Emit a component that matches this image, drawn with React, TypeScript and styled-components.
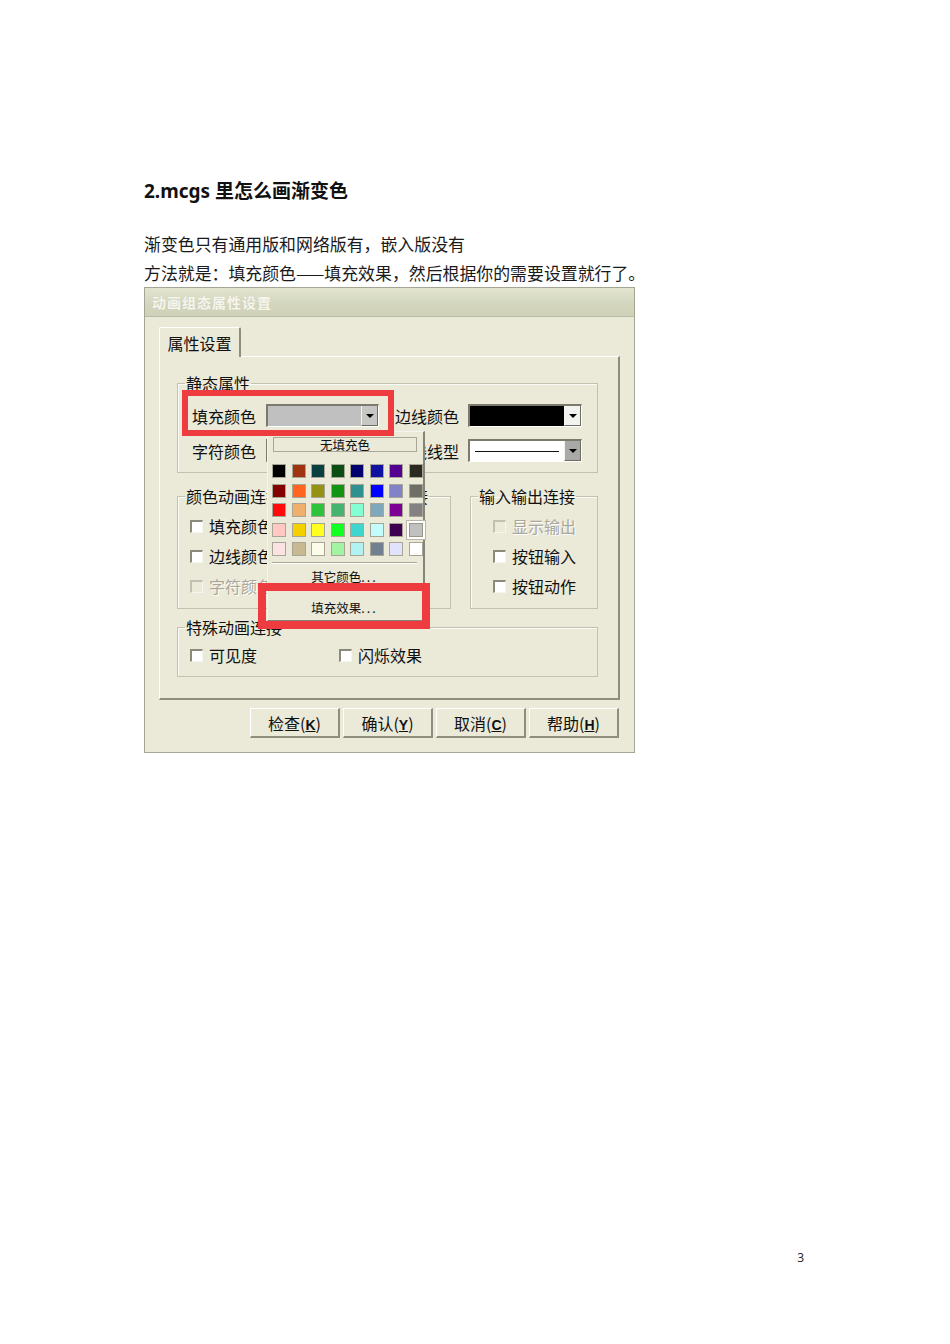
import React from "react";
import styled, { createGlobalStyle } from "styled-components";

const GlobalStyle = createGlobalStyle`
  html, body {
    margin: 0;
    padding: 0;
    background: #fff;
  }
  body {
    font-family: "Noto Sans CJK SC", "Noto Sans", sans-serif;
    color: #000;
  }
`;

const CJK = `"Noto Sans CJK SC", sans-serif`;

const Page = styled.div`
  width: 950px;
  height: 1344px;
  box-sizing: border-box;
  padding: 178px 0 0 144px;
  display: flex;
  flex-direction: column;
`;

const Heading = styled.h2`
  margin: 0;
  font-family: "Noto Sans", "Noto Sans CJK SC", sans-serif;
  font-weight: 700;
  font-size: 19px;
  line-height: 26px;
  color: #111;
`;

const Para = styled.p<{ $first?: boolean }>`
  margin: ${({ $first }) => ($first ? "25px 0 0" : "0")};
  font-family: ${CJK};
  font-size: 16.9px;
  line-height: 29px;
  color: #1a1a1a;
  white-space: nowrap;
`;

const Footer = styled.div`
  margin-top: auto;
  padding: 0 146px 78px 0;
  text-align: right;
  font-family: "Open Sans", "Liberation Sans", sans-serif;
  font-size: 12px;
  line-height: 16px;
  color: #222;
`;

/* ---------- dialog ---------- */

const Dialog = styled.div`
  position: relative;
  width: 491px;
  box-sizing: border-box;
  border: 1px solid #a4a594;
  background: #ebe9d8;
  font-family: ${CJK};
  font-size: 16px;
  color: #111;
`;

const TitleBar = styled.div`
  height: 28px;
  display: flex;
  align-items: center;
  padding-left: 7px;
  background: linear-gradient(#e2e4cf, #d3d6bd 60%, #cfd2b9);
  border-bottom: 1px solid #babba6;
  color: #f6f6ee;
  font-size: 14px;
  font-weight: 700;
  letter-spacing: 1px;
  text-shadow: 0 0 1px #c8c8b4;
`;

const Body = styled.div`
  padding: 9px 14px 14px 14px;
`;

const TabStrip = styled.div`
  display: flex;
`;

const Tab = styled.div`
  width: 82px;
  height: 30px;
  box-sizing: border-box;
  display: flex;
  align-items: center;
  justify-content: center;
  border-left: 1px solid #fff;
  border-top: 1px solid #fff;
  border-right: 2px solid #8e8d7e;
  border-radius: 2px 2px 0 0;
  font-size: 16px;
  position: relative;
  top: 1px;
  background: #ebe9d8;
`;

const Panel = styled.div`
  width: 461px;
  box-sizing: border-box;
  border-top: 1px solid #fff;
  border-left: 1px solid #fff;
  border-right: 2px solid #8e8d7e;
  border-bottom: 2px solid #8e8d7e;
  padding: 18px 20px 21px 17px;
  display: flex;
  flex-direction: column;
`;

const Group = styled.fieldset<{ $mt?: number }>`
  margin: ${({ $mt }) => $mt ?? 0}px 0 0 0;
  padding: 0;
  border: 1px solid #c3c1b0;
  box-shadow: inset 1px 1px 0 #fbfbf6;
  min-width: 0;
  box-sizing: border-box;
`;

const Legend = styled.legend`
  padding: 0 1px;
  margin-left: 7px;
  font-size: 16px;
  line-height: 16px;
  height: 16px;
  white-space: nowrap;
`;

const GroupBody = styled.div<{ $pl?: number; $pt?: number; $pb?: number }>`
  padding: ${({ $pt }) => $pt ?? 12}px 6px ${({ $pb }) => $pb ?? 12}px
    ${({ $pl }) => $pl ?? 12}px;
`;

const StaticGrid = styled.div`
  display: grid;
  grid-template-columns: 74px 113px 89px 114px;
  row-gap: 12px;
  align-items: center;
  & > :nth-child(3),
  & > :nth-child(7) {
    padding-left: 16px;
  }
`;

const Label = styled.span<{ $disabled?: boolean }>`
  font-size: 16px;
  line-height: 20px;
  white-space: nowrap;
  color: ${({ $disabled }) => ($disabled ? "#a9a799" : "#111")};
  text-shadow: ${({ $disabled }) => ($disabled ? "1px 1px 0 #fff" : "none")};
`;

const ComboBox = styled.div<{ $fill: string }>`
  height: 23px;
  box-sizing: border-box;
  display: flex;
  border-top: 2px solid #7b7a6c;
  border-left: 2px solid #7b7a6c;
  border-right: 1px solid #fff;
  border-bottom: 1px solid #fff;
  background: ${({ $fill }) => $fill};
`;

const ComboValue = styled.div`
  flex: 1;
  display: flex;
  align-items: center;
  padding: 0 5px;
`;

const LineSample = styled.div`
  flex: 1;
  height: 1px;
  background: #111;
`;

const ComboButton = styled.div<{ $bg: string }>`
  width: 17px;
  box-sizing: border-box;
  display: flex;
  align-items: center;
  justify-content: center;
  background: ${({ $bg }) => $bg};
  border-left: 1px solid #f4f4ee;
  border-right: 1px solid #6d6c60;
  border-bottom: 1px solid #6d6c60;
  &::after {
    content: "";
    border-left: 4px solid transparent;
    border-right: 4px solid transparent;
    border-top: 4px solid #000;
  }
`;

const GroupRow = styled.div`
  display: grid;
  grid-template-columns: 127px 128px 128px;
  column-gap: 19px;
  margin-top: 15px;
`;

const CheckList = styled.div`
  display: flex;
  flex-direction: column;
  gap: 10px;
`;

const CheckItem = styled.div`
  display: flex;
  align-items: center;
  gap: 6px;
  height: 20px;
`;

const Box = styled.span<{ $disabled?: boolean }>`
  width: 13px;
  height: 13px;
  box-sizing: border-box;
  flex: none;
  border-top: 2px solid ${({ $disabled }) => ($disabled ? "#c2c0b2" : "#8a897c")};
  border-left: 2px solid ${({ $disabled }) => ($disabled ? "#c2c0b2" : "#8a897c")};
  border-right: 1px solid #f6f6f0;
  border-bottom: 1px solid #f6f6f0;
  background: ${({ $disabled }) => ($disabled ? "#ebe9d8" : "#fff")};
`;

const SpecialRow = styled.div`
  display: grid;
  grid-template-columns: 149px 1fr;
`;

const ButtonRow = styled.div`
  display: flex;
  justify-content: flex-end;
  gap: 3px;
  margin-top: 8px;
  padding-right: 1px;
`;

const Button = styled.button`
  width: 90px;
  height: 30px;
  padding: 0;
  background: #ebe9d8;
  border-top: 1px solid #fff;
  border-left: 1px solid #fff;
  border-right: 2px solid #8e8d7e;
  border-bottom: 2px solid #8e8d7e;
  font-family: ${CJK};
  font-size: 16px;
  color: #111;
  & u {
    font-family: "Liberation Sans", sans-serif;
    font-weight: 700;
    font-size: 14px;
  }
`;

/* ---------- colour popup (overlay) ---------- */

const Popup = styled.div`
  position: absolute;
  left: 122px;
  top: 143px;
  width: 158px;
  height: 190px;
  box-sizing: border-box;
  background: #ebe9d8;
  border-left: 1px solid #f4f4ee;
  border-top: 1px solid #f4f4ee;
  border-right: 2px solid #85847a;
  border-bottom: 1px solid #85847a;
  padding: 5px 6px 0 4px;
  display: flex;
  flex-direction: column;
  z-index: 2;
`;

const NoFill = styled.div`
  height: 15px;
  margin-left: 1px;
  box-sizing: border-box;
  border: 1px solid #a9a897;
  display: flex;
  align-items: center;
  justify-content: center;
  font-size: 12.5px;
  line-height: 13px;
`;

const Swatches = styled.div`
  display: grid;
  grid-template-columns: repeat(8, 12px);
  grid-auto-rows: 12px;
  column-gap: 7.5px;
  row-gap: 7.5px;
  margin-top: 13px;
  padding-left: 1px;
`;

const Swatch = styled.span<{ $c: string; $sel?: boolean }>`
  background: ${({ $c }) => $c};
  box-shadow: ${({ $sel }) =>
    $sel
      ? "0 0 0 1px #999786, 0 0 0 3px #fff, 0 0 0 4px #b9b8a8"
      : "0 0 0 1px #a7a696"};
`;

const Separator = styled.div`
  margin-top: 7px;
  height: 1px;
  background: #a9a897;
  border-bottom: 1px solid #fff;
`;

const MenuItem = styled.div<{ $mt: number }>`
  margin-top: ${({ $mt }) => $mt}px;
  text-align: center;
  font-size: 12.5px;
  line-height: 16px;
  & span {
    letter-spacing: 2px;
  }
`;

const Highlight = styled.div<{ $l: number; $t: number; $w: number; $h: number; $b: number }>`
  position: absolute;
  left: ${({ $l }) => $l}px;
  top: ${({ $t }) => $t}px;
  width: ${({ $w }) => $w}px;
  height: ${({ $h }) => $h}px;
  box-sizing: border-box;
  border: ${({ $b }) => $b}px solid #ee3b3f;
  z-index: 3;
  pointer-events: none;
`;

const palette = [
  ["#000000", "#a03410", "#0a4040", "#0b4d12", "#02026e", "#1212a0", "#540090", "#2a2a20"],
  ["#820000", "#ff6420", "#949212", "#129412", "#2f9090", "#0000ff", "#8282c8", "#6f6f66"],
  ["#ff0a0a", "#eeb06c", "#2fc23c", "#44b46e", "#84ffd4", "#80a8bc", "#7c0094", "#828282"],
  ["#ffc8c2", "#f4d000", "#ffff22", "#12ff22", "#40d6d0", "#c2fcfc", "#3e0050", "#c0c0c0"],
  ["#fce2e2", "#c8b992", "#fcfce8", "#a2f4a2", "#b2f2f2", "#708090", "#e2e2ff", "#ffffff"],
];

type Item = { text: string; disabled?: boolean };

const Check: React.FC<Item> = ({ text, disabled }) => (
  <CheckItem>
    <Box $disabled={disabled} />
    <Label $disabled={disabled}>{text}</Label>
  </CheckItem>
);

const colorLinks: Item[] = [
  { text: "填充颜色" },
  { text: "边线颜色" },
  { text: "字符颜色", disabled: true },
];
const ioLinks: Item[] = [
  { text: "显示输出", disabled: true },
  { text: "按钮输入" },
  { text: "按钮动作" },
];

const buttons = [
  ["检查", "K"],
  ["确认", "Y"],
  ["取消", "C"],
  ["帮助", "H"],
];

const App: React.FC = () => (
  <>
    <GlobalStyle />
    <Page>
      <Heading>2.mcgs 里怎么画渐变色</Heading>
      <Para $first>渐变色只有通用版和网络版有，嵌入版没有</Para>
      <Para>方法就是：填充颜色——填充效果，然后根据你的需要设置就行了。</Para>

      <Dialog>
        <TitleBar>动画组态属性设置</TitleBar>
        <Body>
          <TabStrip>
            <Tab>属性设置</Tab>
          </TabStrip>
          <Panel>
            <Group>
              <Legend>静态属性</Legend>
              <GroupBody $pl={14} $pt={13} $pb={10}>
                <StaticGrid>
                  <Label>填充颜色</Label>
                  <ComboBox $fill="#c0c0c0">
                    <ComboValue />
                    <ComboButton $bg="#c6c6c2" />
                  </ComboBox>
                  <Label>边线颜色</Label>
                  <ComboBox $fill="#000">
                    <ComboValue />
                    <ComboButton $bg="#f2f2ee" />
                  </ComboBox>
                  <Label>字符颜色</Label>
                  <ComboBox $fill="#e8e8e4">
                    <ComboValue />
                    <ComboButton $bg="#e0dfd8" />
                  </ComboBox>
                  <Label>边线线型</Label>
                  <ComboBox $fill="#fff">
                    <ComboValue>
                      <LineSample />
                    </ComboValue>
                    <ComboButton $bg="#a9a9a5" />
                  </ComboBox>
                </StaticGrid>
              </GroupBody>
            </Group>

            <GroupRow>
              <Group>
                <Legend>颜色动画连接</Legend>
                <GroupBody $pl={12}>
                  <CheckList>
                    {colorLinks.map((c) => (
                      <Check key={c.text} {...c} />
                    ))}
                  </CheckList>
                </GroupBody>
              </Group>
              {/* middle group sits behind the colour popup; only its legend tail shows */}
              <Group>
                <Legend>位置动画连接</Legend>
              </Group>
              <Group>
                <Legend>输入输出连接</Legend>
                <GroupBody $pl={22}>
                  <CheckList>
                    {ioLinks.map((c) => (
                      <Check key={c.text} {...c} />
                    ))}
                  </CheckList>
                </GroupBody>
              </Group>
            </GroupRow>

            <Group $mt={10}>
              <Legend>特殊动画连接</Legend>
              <GroupBody $pl={12} $pt={10} $pb={11}>
                <SpecialRow>
                  <Check text="可见度" />
                  <Check text="闪烁效果" />
                </SpecialRow>
              </GroupBody>
            </Group>
          </Panel>

          <ButtonRow>
            {buttons.map(([t, k]) => (
              <Button key={k}>
                {t}(<u>{k}</u>)
              </Button>
            ))}
          </ButtonRow>
        </Body>

        <Popup>
          <NoFill>无填充色</NoFill>
          <Swatches>
            {palette.flatMap((row, r) =>
              row.map((c, i) => <Swatch key={`${r}-${i}`} $c={c} $sel={r === 3 && i === 7} />)
            )}
          </Swatches>
          <Separator />
          <MenuItem $mt={5}>
            其它颜色<span>...</span>
          </MenuItem>
          <MenuItem $mt={15}>
            填充效果<span>...</span>
          </MenuItem>
        </Popup>

        <Highlight $l={37} $t={102} $w={212} $h={46} $b={6} />
        <Highlight $l={113} $t={295} $w={172} $h={46} $b={8} />
      </Dialog>

      <Footer>3</Footer>
    </Page>
  </>
);

export default App;
